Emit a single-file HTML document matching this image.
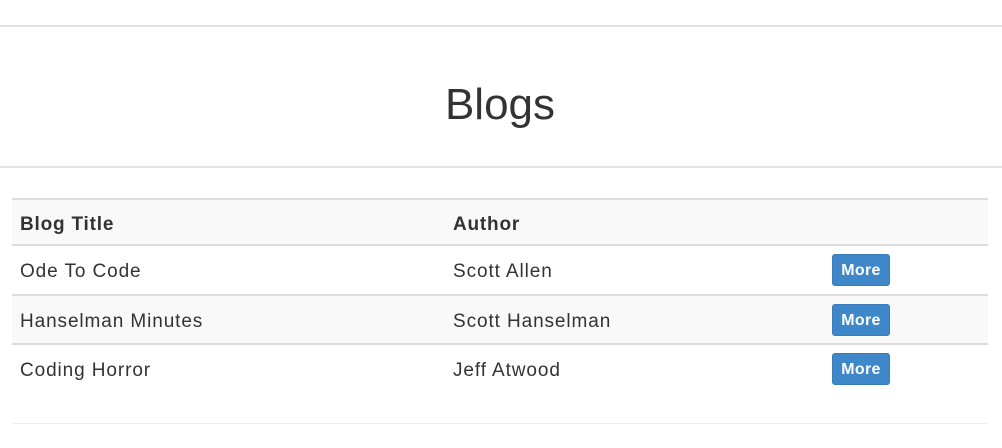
<!DOCTYPE html><html><head><style>
body{margin:0;width:1002px;height:448px;background:#fff;font-family:"Liberation Sans",sans-serif;color:#333;position:relative;overflow:hidden}
.l{position:absolute;left:0;width:1002px;height:2px;background:#e3e3e3}
h1{position:absolute;top:78px;left:0;width:1000px;text-align:center;margin:0;font-weight:400;font-size:44px;line-height:54px}
.r{position:absolute;left:12px;width:976px;border-top:2px solid #ddd;font-size:19px;letter-spacing:0.9px}
.r span{position:absolute;top:2px;line-height:46px}
.b{position:absolute;left:820px;top:8px;width:58px;height:32px;background:#3e87c9;border:1px solid #3a7cb8;border-radius:3px;box-sizing:border-box;color:#fff;font-size:16px;letter-spacing:0.3px;line-height:32px;text-align:center;font-weight:bold}
</style></head><body>
<div class="l" style="top:25px"></div>
<h1>Blogs</h1>
<div class="l" style="top:166px"></div>
<div class="r" style="top:198px;height:46px;background:#f9f9f9;font-weight:bold;letter-spacing:0.8px"><span style="left:8px">Blog Title</span><span style="left:441px">Author</span></div>
<div class="r" style="top:244px;height:48px"><span style="left:8px;line-height:48px">Ode To Code</span><span style="left:441px;line-height:48px">Scott Allen</span><div class="b">More</div></div>
<div class="r" style="top:294px;height:48px;background:#f9f9f9"><span style="left:8px;line-height:48px">Hanselman Minutes</span><span style="left:441px;line-height:48px">Scott Hanselman</span><div class="b">More</div></div>
<div class="r" style="top:343px;height:48px"><span style="left:8px;line-height:48px">Coding Horror</span><span style="left:441px;line-height:48px">Jeff Atwood</span><div class="b">More</div></div>
<div style="position:absolute;left:12px;top:423px;width:976px;height:1px;background:#eee"></div>
</body></html>
